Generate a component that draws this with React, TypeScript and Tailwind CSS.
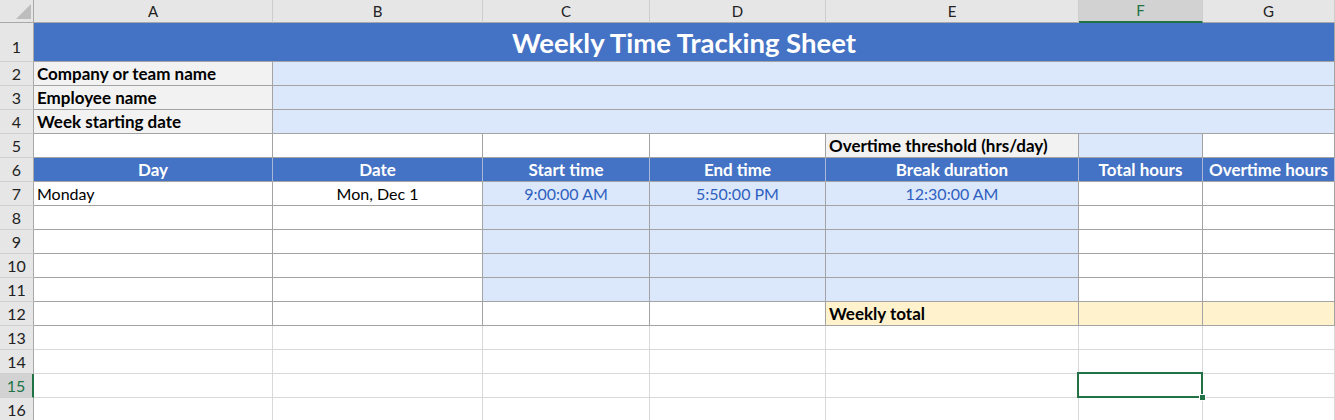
import React from "react";

const TB = "border-r border-b border-[#a3a3a3]";
const GL = "border-r border-b border-[#d9d9d9]";
const BLUEHDR = "bg-[#4472c4] text-white font-bold text-[17px] justify-center border-r border-b border-r-[#a9b8d6] border-b-[#a3a3a3]";
const LBLUE = "bg-[#dbe8fb]";

function C({ className = "", children }: { className?: string; children?: React.ReactNode }) {
  return <div className={"flex items-center overflow-visible whitespace-nowrap " + className}>{children}</div>;
}

function RowHdr({ n, tall, sel }: { n: number; tall?: boolean; sel?: boolean }) {
  return (
    <div
      className={
        "flex justify-center border-b border-b-[#cfcfcf] text-[16px] " +
        (tall ? "items-end pb-[2px] " : "items-center ") +
        (sel
          ? "bg-[#d2d2d2] text-[#217346] border-r-2 border-r-[#217346]"
          : "bg-[#e6e6e6] text-[#222] border-r border-r-[#a8a8a8]")
      }
    >
      {n}
    </div>
  );
}

function ColHdr({ l, sel }: { l: string; sel?: boolean }) {
  return (
    <div
      className={
        "flex items-center justify-center text-[15px] border-r border-r-[#cdcdcd] " +
        (sel
          ? "bg-[#d2d2d2] text-[#217346] border-b-2 border-b-[#217346]"
          : "bg-[#e6e6e6] text-[#222] border-b border-b-[#a8a8a8]")
      }
    >
      {l}
    </div>
  );
}

export default function App() {
  return (
    <div className="w-[1335px] h-[420px] overflow-hidden bg-white font-['Lato','Liberation_Sans',sans-serif] text-[16px] text-black">
      <div className="grid grid-cols-[34px_239px_210px_167px_176px_253px_124px_132px] grid-rows-[23px_39px_repeat(15,24px)]">
        {/* header row */}
        <div className="relative bg-[#e6e6e6] border-r border-r-[#a8a8a8] border-b border-b-[#a8a8a8]">
          <svg className="absolute left-[14px] top-[4px]" width="18" height="16" viewBox="0 0 18 16">
            <polygon points="17,0 17,15 2,15" fill="#bdbdbd" />
          </svg>
        </div>
        <ColHdr l="A" />
        <ColHdr l="B" />
        <ColHdr l="C" />
        <ColHdr l="D" />
        <ColHdr l="E" />
        <ColHdr l="F" sel />
        <ColHdr l="G" />

        {/* row 1 */}
        <RowHdr n={1} tall />
        <C className={"col-span-7 justify-center bg-[#4472c4] text-white font-bold text-[27.5px] pt-[1px] " + TB}>
          Weekly Time Tracking Sheet
        </C>

        {/* rows 2-4 */}
        {["Company or team name", "Employee name", "Week starting date"].map((t, i) => (
          <React.Fragment key={t}>
            <RowHdr n={i + 2} />
            <C className={"bg-[#f2f2f2] font-bold text-[17px] pl-[3px] " + TB}>{t}</C>
            <C className={"col-span-6 " + LBLUE + " " + TB} />
          </React.Fragment>
        ))}

        {/* row 5 */}
        <RowHdr n={5} />
        <C className={TB} />
        <C className={TB} />
        <C className={TB} />
        <C className={TB} />
        <C className={"bg-[#f2f2f2] font-bold text-[17px] pl-[3px] " + TB}>Overtime threshold (hrs/day)</C>
        <C className={LBLUE + " " + TB} />
        <C className={TB} />

        {/* row 6 */}
        <RowHdr n={6} />
        <C className={BLUEHDR}>Day</C>
        <C className={BLUEHDR}>Date</C>
        <C className={BLUEHDR}>Start time</C>
        <C className={BLUEHDR}>End time</C>
        <C className={BLUEHDR}>Break duration</C>
        <C className={BLUEHDR}>Total hours</C>
        <C className={BLUEHDR}>Overtime hours</C>

        {/* row 7 */}
        <RowHdr n={7} />
        <C className={"pl-[3px] " + TB}>Monday</C>
        <C className={"justify-center " + TB}>Mon, Dec 1</C>
        <C className={"justify-center text-[#2f5fbf] " + LBLUE + " " + TB}>9:00:00 AM</C>
        <C className={"justify-center text-[#2f5fbf] " + LBLUE + " " + TB}>5:50:00 PM</C>
        <C className={"justify-center text-[#2f5fbf] " + LBLUE + " " + TB}>12:30:00 AM</C>
        <C className={TB} />
        <C className={TB} />

        {/* rows 8-11 */}
        {[8, 9, 10, 11].map((n) => (
          <React.Fragment key={n}>
            <RowHdr n={n} />
            <C className={TB} />
            <C className={TB} />
            <C className={LBLUE + " " + TB} />
            <C className={LBLUE + " " + TB} />
            <C className={LBLUE + " " + TB} />
            <C className={TB} />
            <C className={TB} />
          </React.Fragment>
        ))}

        {/* row 12 */}
        <RowHdr n={12} />
        <C className={TB} />
        <C className={TB} />
        <C className={TB} />
        <C className={TB} />
        <C className={"bg-[#fff2cc] font-bold text-[17px] pl-[3px] " + TB}>Weekly total</C>
        <C className={"bg-[#fff2cc] " + TB} />
        <C className={"bg-[#fff2cc] " + TB} />

        {/* rows 13-16 */}
        {[13, 14, 15, 16].map((n) => (
          <React.Fragment key={n}>
            <RowHdr n={n} sel={n === 15} />
            <C className={GL} />
            <C className={GL} />
            <C className={GL} />
            <C className={GL} />
            <C className={GL} />
            <div className={"relative " + GL}>
              {n === 15 && (
                <div className="absolute left-[-2px] top-[-2px] w-[126px] h-[26px] border-2 border-[#217346] z-10">
                  <div className="absolute right-[-5px] bottom-[-5px] w-[7px] h-[7px] bg-[#217346] border border-white" />
                </div>
              )}
            </div>
            <C className={GL} />
          </React.Fragment>
        ))}
      </div>
    </div>
  );
}
